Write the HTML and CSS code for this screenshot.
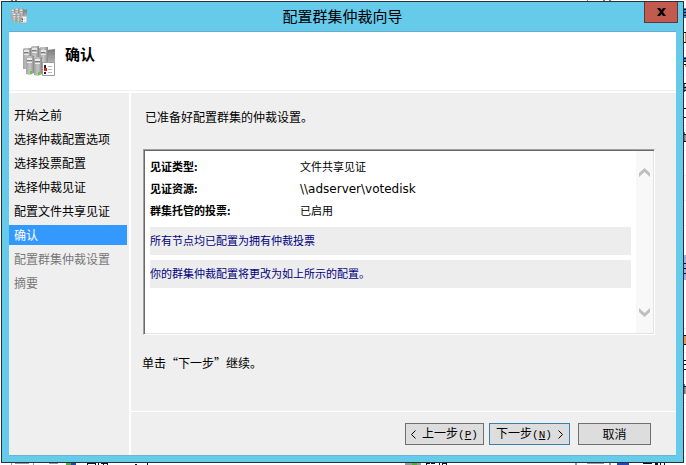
FILE: index.html
```html
<!DOCTYPE html>
<html lang="zh-CN">
<head>
  <meta charset="UTF-8" />
  <meta name="viewport" content="width=device-width, initial-scale=1.0"/>
  <title>配置群集仲裁向导</title>
  <link rel="stylesheet" href="styles.css">
</head>
<body>
  <!-- Edges of the console behind the dialog -->
  <svg class="backdrop backdrop-top" width="686" height="1" shape-rendering="crispEdges" aria-hidden="true">
    <path fill="#777" d="M11 0h2v1h-2zM15 0h2v1h-2zM587 0h1v1h-1zM603 0h2v1h-2zM609 0h2v1h-2z"/>
  </svg>
  <svg class="backdrop backdrop-right" width="2" height="465" shape-rendering="crispEdges" aria-hidden="true">
    <path fill="#eee" d="M0 50h2v1H0zM0 75h2v1H0zM0 100h2v1H0zM0 125h2v1H0zM0 150h2v1H0zM0 175h2v1H0zM0 200h2v1H0zM0 225h2v1H0zM0 328h2v1H0zM0 352h2v1H0zM0 377h2v1H0zM0 402h2v1H0zM0 427h2v1H0zM0 452h2v1H0z"/>
    <path fill="#9db4dc" d="M0 255h2v25H0z"/>
    <path fill="#3a86c8" d="M0 8h2v10H0zM0 57h2v4H0zM0 83h1v9H0zM0 132h1v10H0zM0 384h1v10H0z"/>
    <path fill="#e3984a" d="M1 33h1v9H1zM1 65h1v2H1zM1 86h1v5H1zM1 135h1v7H1zM0 336h2v9H0zM1 386h1v8H1z"/>
    <path fill="#111" d="M0 9h2v1H0zM0 12h2v1H0zM0 15h2v1H0zM0 32h2v1H0zM0 42h2v1H0zM0 58h2v1H0zM0 61h2v1H0zM0 64h2v1H0zM0 83h2v1H0zM0 87h2v1H0zM0 90h2v1H0zM0 108h2v1H0zM0 117h2v1H0zM0 134h2v1H0zM0 141h2v1H0zM0 263h2v1H0zM0 268h2v1H0zM0 273h2v1H0zM0 335h2v1H0zM0 344h2v1H0zM0 360h2v1H0zM0 364h2v1H0zM0 369h2v1H0zM0 386h2v1H0z"/>
  </svg>
  <svg class="backdrop backdrop-bottom" width="686" height="2" shape-rendering="crispEdges" aria-hidden="true">
    <path fill="#999" d="M11 0h1v2h-1zM15 0h14v1H15zM33 0h1v2h-1zM49 0h9v1h-9zM405 0h7v2h-7zM417 0h4v2h-4zM575 0h2v2h-2zM587 0h17v1h-17zM609 0h2v2h-2z"/>
    <path fill="#4ab32c" d="M66 0h5v2h-5zM412 0h5v2h-5z"/>
    <path fill="#2446b4" d="M71 0h5v2h-5zM617 0h12v2h-12z"/>
    <path fill="#111" d="M87 0h9v1h-9zM87 1h1v1h-1zM95 1h1v1h-1zM98 0h1v2h-1zM101 0h7v1h-7zM103 1h1v1h-1zM107 1h1v1h-1zM135 1h2v1h-2zM147 0h1v2h-1zM426 0h4v1h-4zM426 1h1v1h-1zM431 0h4v1h-4zM439 0h1v2h-1zM442 0h5v1h-5zM442 1h1v1h-1zM446 1h1v1h-1zM643 0h9v1h-9zM655 0h3v2h-3zM660 0h1v2h-1zM664 0h1v2h-1z"/>
  </svg>

  <div class="window">
    <header class="title-bar">
      <svg class="app-icon" width="16" height="16" viewBox="0 0 32 32" aria-hidden="true"><use href="#servers"/></svg>
      <h1>配置群集仲裁向导</h1>
      <button class="close-btn" type="button" aria-label="关闭">
        <svg width="9" height="8" viewBox="0 0 9 8" aria-hidden="true">
          <path fill="#000" d="M0 0h3l1.500 2L6 0h3L6 4l3 4H6L4.500 6 3 8H0l3-4z"/>
        </svg>
      </button>
    </header>

    <div class="content">
      <div class="page-header">
        <svg width="32" height="32" viewBox="0 0 32 32" aria-hidden="true">
          <defs>
            <linearGradient id="metal" x1="0" x2="1" y1="0" y2="0">
              <stop offset="0" stop-color="#a2a2a2"/>
              <stop offset="0.500" stop-color="#c6c6c6"/>
              <stop offset="0.800" stop-color="#a4a4a4"/>
              <stop offset="1" stop-color="#858585"/>
            </linearGradient>
            <linearGradient id="side" x1="0" x2="0" y1="0" y2="1">
              <stop offset="0" stop-color="#7c7c7c"/>
              <stop offset="1" stop-color="#b4b4b4"/>
            </linearGradient>
          </defs>
          <g id="servers">
            <path fill="url(#side)" d="M24 4l8-1v14h-8z"/>
            <path fill="url(#metal)" d="M0 3l2-1h6v21H0z"/>
            <path fill="url(#metal)" d="M8 1l2-1h6v22H8z"/>
            <path fill="url(#metal)" d="M16 2l2-1h7v16h-9z"/>
            <path fill="#e6e6e6" d="M1 4h5v2H1zM9 2h5v2H9zM18 4h5v2h-5zM1 8h5v1H1zM9 6h5v1H9zM18 8h5v1h-5z"/>
            <path fill="url(#metal)" d="M3 12l2-2h6v17l-4 2-4-1z"/>
            <path fill="url(#metal)" d="M11 13l2-2h6v17l-4 2-4-1z"/>
            <path fill="#ececec" d="M4 12h5v2H4zM12 13h5v2h-5zM4 16h5v1H4zM12 17h5v1h-5z"/>
            <path fill="#7c7c7c" d="M4 14h5v1H4zM12 15h5v1h-5zM1 6h4v1H1zM9 4h4v1H9zM18 6h4v1h-4z"/>
            <path fill="#62cf28" d="M7 25h2v3H7zM15 26h2v3h-2z"/>
            <path fill="#fff" stroke="#9c9c9c" d="M19.500 16.500h12v13h-12z"/>
            <path fill="#302020" d="M21 19h2v3h-2zM21 26h2v2h-2z"/>
            <path fill="#d8201c" d="M21 22h3v3h-3z"/>
            <path fill="#b4b8c0" d="M25 20h4v1h-4zM25 23h4v1h-4zM25 26h4v1h-4z"/>
          </g>
        </svg>
        <h2>确认</h2>
      </div>

      <div class="body-area">
        <nav class="steps">
          <ol>
            <li>开始之前</li>
            <li>选择仲裁配置选项</li>
            <li>选择投票配置</li>
            <li>选择仲裁见证</li>
            <li>配置文件共享见证</li>
            <li class="active" aria-current="step">确认</li>
            <li class="pending">配置群集仲裁设置</li>
            <li class="pending">摘要</li>
          </ol>
        </nav>

        <main>
          <div class="page">
            <p class="intro">已准备好配置群集的仲裁设置。</p>

            <div class="summary">
              <div class="summary-text">
                <table>
                  <tr>
                    <th scope="row">见证类型:</th>
                    <td>文件共享见证</td>
                  </tr>
                  <tr>
                    <th scope="row">见证资源:</th>
                    <td class="share-path">\\adserver\votedisk</td>
                  </tr>
                  <tr>
                    <th scope="row">群集托管的投票:</th>
                    <td>已启用</td>
                  </tr>
                </table>
                <p class="note">所有节点均已配置为拥有仲裁投票</p>
                <p class="note">你的群集仲裁配置将更改为如上所示的配置。</p>
              </div>
              <div class="scrollbar">
                <button type="button" aria-label="向上滚动">
                  <svg width="11" height="9" viewBox="0 0 11 9" aria-hidden="true"><path d="M0 5L5.500 0 11 5V9L5.500 4 0 9z"/></svg>
                </button>
                <button type="button" aria-label="向下滚动">
                  <svg width="11" height="9" viewBox="0 0 11 9" aria-hidden="true"><path d="M0 4L5.500 9 11 4V0L5.500 5 0 0z"/></svg>
                </button>
              </div>
            </div>

            <p class="hint">单击“下一步”继续。</p>
          </div>

          <footer>
            <button class="btn" type="button">
              <svg width="5" height="9" viewBox="0 0 5 9" aria-hidden="true"><path d="M4.500 .5l-4 4 4 4"/></svg>
              <span>上一步<span class="key">(<u>P</u>)</span></span>
            </button>
            <button class="btn btn-default" type="button">
              <span>下一步<span class="key">(<u>N</u>)</span></span>
              <svg width="5" height="9" viewBox="0 0 5 9" aria-hidden="true"><path d="M.5 .5l4 4-4 4"/></svg>
            </button>
            <button class="btn btn-cancel" type="button">取消</button>
          </footer>
        </main>
      </div>
    </div>
  </div>
</body>
</html>
```
FILE: styles.css
```css
/* General Styles */
* {
  box-sizing: border-box;
}

body {
  display: flex;
  min-height: 100vh;
  margin: 0;
  padding: 1px 2px 2px 1px;
  background-color: #fff;
  color: #000;
  font-family: "Noto Sans CJK SC", sans-serif;
  font-size: 12px;
  line-height: 20px;
}

h1,
h2,
p,
ol {
  margin: 0;
  padding: 0;
}

button {
  font-family: inherit;
  font-size: 12px;
  color: #000;
}

svg {
  display: block;
  flex: none;
}

/* What shows around the dialog */
.backdrop {
  position: absolute;
}

.backdrop-top {
  top: 0;
  left: 0;
}

.backdrop-right {
  top: 0;
  right: 0;
}

.backdrop-bottom {
  bottom: 0;
  left: 0;
}

/* Window Frame */
.window {
  flex: 1;
  display: flex;
  flex-direction: column;
  border: 1px solid #263238;
  background-color: #66caeb;
}

.title-bar {
  display: grid;
  grid-template-columns: 1fr auto 1fr;
  height: 29px;
  padding: 0 5px;
}

.app-icon {
  margin: 6px 0 0 4px;
}

.title-bar h1 {
  font-size: 15px;
  font-weight: 400;
  line-height: 27px;
}

.close-btn {
  justify-self: end;
  display: flex;
  align-items: center;
  justify-content: center;
  width: 34px;
  height: 21px;
  padding: 0;
  border: 1px solid #5c3a3c;
  border-top: none;
  background-color: #c35a50;
}

.content {
  flex: 1;
  display: flex;
  flex-direction: column;
  margin: 0 7px 6px;
  border-top: 1px solid #6aaccb;
  border-bottom: 1px solid #6fb3cf;
  background-color: #fff;
}

/* Page Header */
.page-header {
  display: flex;
  gap: 10px;
  height: 59px;
  margin-bottom: 2px;
  padding: 14px 14px 0;
  border-bottom: 1px solid #efefef;
}

.page-header h2 {
  margin-top: -2px;
  font-size: 15px;
  font-weight: 700;
}

/* Steps */
.body-area {
  flex: 1;
  display: flex;
  gap: 2px;
}

.steps {
  width: 120px;
  padding: 12px 2px 12px 0;
  background-color: #efefef;
}

.steps ol {
  display: flex;
  flex-direction: column;
  gap: 4px;
  list-style: none;
}

.steps li {
  padding-left: 5px;
}

.steps .active {
  background-color: #3399ff;
  color: #fff;
}

.steps .pending {
  color: #787878;
}

/* Page */
main {
  flex: 1;
  display: flex;
  flex-direction: column;
  background-color: #efefef;
}

.page {
  flex: 1;
  display: flex;
  flex-direction: column;
  padding: 14px 21px 38px 11px;
}

.intro {
  padding-left: 3px;
}

.hint {
  margin-top: 18px;
}

/* Summary Box */
.summary {
  flex: 1;
  display: flex;
  margin: 22px 0 0 1px;
  border: 1px solid #fff;
  border-top-color: #a0a0a0;
  border-left-color: #a0a0a0;
  background-color: #fff;
  box-shadow: inset 1px 1px #696969, inset -1px -1px #e3e3e3;
}

.summary-text {
  flex: 1;
  padding: 5px 5px 5px 6px;
  font-size: 11px;
}

.summary table {
  width: 100%;
  border-collapse: collapse;
  margin-bottom: 6px;
}

.summary th,
.summary td {
  height: 22px;
  padding: 0;
  text-align: left;
}

.summary th {
  width: 150px;
  font-weight: 700;
}

.summary .share-path {
  padding-top: 2px;
  font-family: "DejaVu Sans", Verdana, sans-serif;
  font-size: 12px;
}

.note {
  padding: 3px 0 5px;
  background-color: #ededed;
  color: #000080;
}

.note + .note {
  margin-top: 5px;
}

.scrollbar {
  display: flex;
  flex-direction: column;
  justify-content: space-between;
  width: 17px;
  margin: 1px 1px 1px 0;
  padding: 17px 3px 16px;
  background-color: #f8f8f8;
}

.scrollbar button {
  padding: 0;
  border: none;
  background: none;
}

.scrollbar path {
  fill: #bfbfbf;
}

/* Buttons */
footer {
  display: flex;
  justify-content: flex-end;
  padding: 11px 25px 10px;
  border-top: 1px solid #fff;
}

.btn {
  display: flex;
  align-items: center;
  justify-content: center;
  gap: 6px;
  min-width: 79px;
  height: 22px;
  padding: 0 4px;
  border: 1px solid #707070;
  background-color: #dddddd;
  line-height: 20px;
}

.btn path {
  fill: none;
  stroke: #000;
}

.btn-default {
  min-width: 81px;
  margin: 0 8px 0 5px;
  border-color: #3c7fb1;
}

.btn-cancel {
  min-width: 73px;
}

.key {
  font-family: "Liberation Mono", monospace;
  font-size: 11px;
}
```
